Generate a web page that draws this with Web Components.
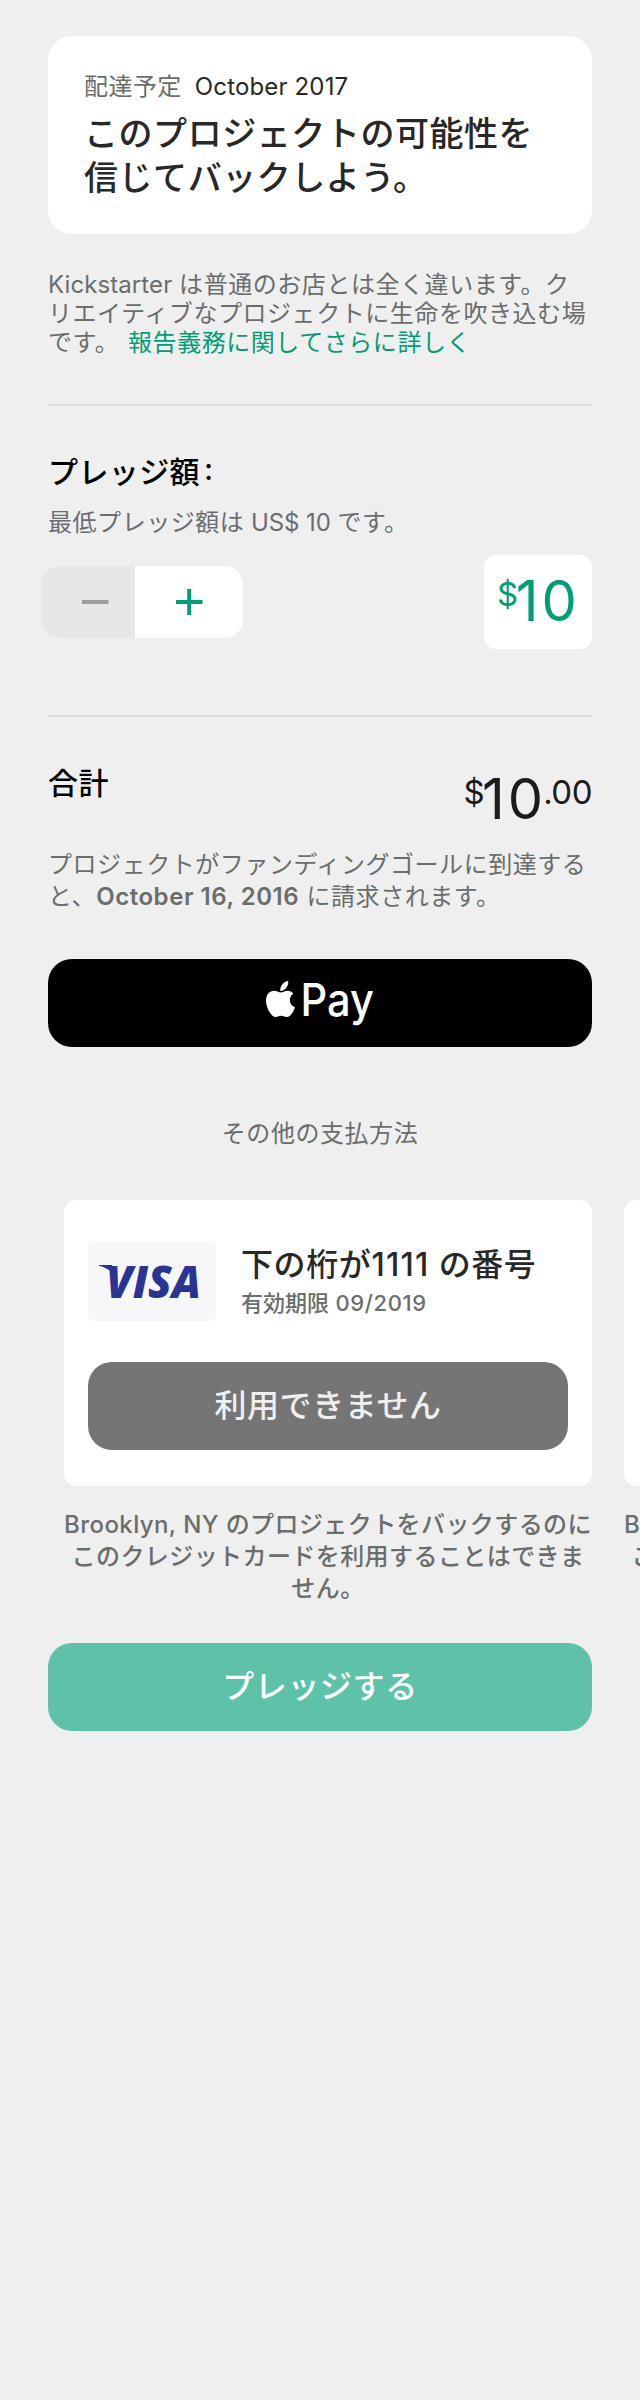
<!DOCTYPE html>
<html lang="ja">
<head>
<meta charset="utf-8">
<title>プレッジ</title>
<style>
  html, body { margin: 0; background: #efefef; }
  body { width: 640px; height: 2400px; overflow: hidden; font-family: Inter, "Noto Sans CJK JP", sans-serif; color: #6a6d6c; }
</style>
</head>
<body>
<pledge-page></pledge-page>
<script>
const define = (name, html) => {
  const tpl = document.createElement('template');
  tpl.innerHTML = html;
  customElements.define(name, class extends HTMLElement {
    constructor() {
      super();
      this.attachShadow({ mode: 'open' }).append(tpl.content.cloneNode(true));
    }
  });
};

define('reward-card', `
<style>
  :host { display: block; box-sizing: border-box; height: 198px; padding: 36px; background: #fff; border-radius: 24px; }
  .when { font-size: 24px; line-height: 29px; letter-spacing: .45px; white-space: nowrap; }
  .date { color: #282828; margin-left: 13px; letter-spacing: .15px; }
  .title { margin-top: 11px; font-size: 34px; line-height: 44px; font-weight: 500; letter-spacing: .55px; color: #282828; white-space: nowrap; }
</style>
<div class="when"><slot name="label"></slot><span class="date"><slot name="date"></slot></span></div>
<div class="title"><slot></slot></div>`);

define('rule-line', `<style>:host { display: block; height: 2px; background: #dcdcdc; }</style>`);

define('amount-stepper', `
<style>
  :host { display: flex; width: 202px; height: 72px; border-radius: 18px; overflow: hidden; background: #fff; }
  div { display: flex; align-items: center; }
  .minus { width: 53px; padding-left: 41px; background: #e7e7e7; }
  .plus { flex: 1; padding-left: 41px; }
  svg { display: block; }
</style>
<div class="minus"><svg width="27" height="26"><path d="M0 13H26.5" stroke="#9b9e9e" stroke-width="4"/></svg></div>
<div class="plus"><svg width="27" height="26"><path d="M0 13H26.5M13.2 0V26" stroke="#009e74" stroke-width="4"/></svg></div>`);

define('money-amount', `
<style>
  :host { display: flex; align-items: flex-start; line-height: 1; }
  .small { font-size: 33px; line-height: 34px; padding-top: 4px; letter-spacing: -.5px; }
  .big { font-size: 56px; line-height: 56px; margin: 0 -3px 0 -2px; letter-spacing: 3px; }
</style>
<span class="small"><slot name="sign"></slot></span><span class="big"><slot></slot></span><span class="small"><slot name="cents"></slot></span>`);

define('action-button', `
<style>
  :host { display: flex; align-items: center; justify-content: center; height: 88px; border-radius: 24px; font-size: 32px; line-height: 40px; letter-spacing: .6px; font-weight: 500; color: #fff; background: var(--fill, #5ec2a9); }
</style><slot></slot>`);

define('apple-pay-mark', `
<style>:host { display: block; } svg { display: block; }</style>
<svg width="110" height="56" viewBox="0 0 110 56">
  <g fill="#fff" transform="translate(1 5)">
    <path d="M22.2 5.2C22.6 8.2 21.4 10.700 19.900 12.400C18.400 14.200 16.300 15.300 14.300 15.100C14 12.400 15.100 9.800 16.600 8.100C18.200 6.300 20.300 5.300 22.200 5.200Z" transform="translate(0 -4.200)"/>
    <path d="M27.300 13.800C24.900 15.300 23.800 17.500 23.800 20C23.800 23.300 25.800 26 29 27.200C28.400 29.200 27.400 31.300 26.100 33.200C24.500 35.500 23 37 20.700 37C18.500 37 17.700 35.700 15.200 35.700C12.600 35.700 11.700 37 9.600 37C7.300 37 5.700 35.300 4.100 33C1.700 29.600 0 24.900 0 20.600C0 14.500 3.800 10.800 8 10.800C10.700 10.800 12.800 12.500 14.700 12.500C16.500 12.500 18.600 10.700 21.600 10.700C23.900 10.700 26 11.800 27.300 13.800Z"/>
    <text x="34.500" y="36" font-family="Inter" font-size="45.500" font-weight="500" letter-spacing="0" textLength="73.500" lengthAdjust="spacingAndGlyphs">Pay</text>
  </g>
</svg>`);

define('visa-logo', `
<style>
  :host { display: block; width: 128px; height: 80px; border-radius: 6px; background: #f7f7fa; overflow: hidden; }
  svg { display: block; }
</style>
<svg width="128" height="80" viewBox="0 0 128 80">
  <path d="M11 24H24L30 42Q25 28 11 24.800Z" fill="#283593"/>
  <text x="18" y="56.500" fill="#283593" font-family="Open Sans" font-weight="800" font-style="italic" font-size="45" textLength="95" lengthAdjust="spacingAndGlyphs">VISA</text>
</svg>`);

define('payment-card', `
<style>
  :host { display: block; flex: none; width: 528px; }
  .box { box-sizing: border-box; height: 286px; padding: 41px 24px 36px; background: #fff; border-radius: 12px; }
  .head { display: flex; gap: 25px; height: 80px; margin-bottom: 41px; }
  .name { margin-top: 4px; font-size: 32px; line-height: 40px; letter-spacing: .6px; font-weight: 500; color: #282828; white-space: nowrap; }
  .exp { margin-top: 4px; font-size: 22px; line-height: 29px; font-weight: 500; white-space: nowrap; }
  action-button { --fill: #757575; color: #efefef; }
  .note { margin-top: 23px; font-size: 24px; line-height: 32px; letter-spacing: .42px; font-weight: 500; text-align: center; white-space: nowrap; }
  :host([peek]) .head, :host([peek]) action-button { display: none; }
</style>
<div class="box">
  <div class="head"><visa-logo></visa-logo><div><div class="name"><slot name="name"></slot></div><div class="exp"><slot name="expiry"></slot></div></div></div>
  <action-button>利用できません</action-button>
</div>
<div class="note"><slot></slot></div>`);

define('pledge-page', `
<style>
  :host { display: block; padding: 36px 48px 0; }
  .text { font-size: 24px; line-height: 29px; letter-spacing: .55px; white-space: nowrap; }
  .head { font-size: 30px; line-height: 36px; letter-spacing: .4px; font-weight: 500; color: #000; }
  .colon { margin-left: 4px; line-height: 0; vertical-align: 3px; }
  a { color: #009e74; margin-left: 1.5px; }
  .intro { margin: 36px 0 47px; }
  .latin { letter-spacing: .08px; }
  .minimum { margin: 18px 0; color: #6b6c72; }
  .minimum .latin { letter-spacing: -.1px; }
  .row { display: flex; justify-content: space-between; align-items: center; }
  .amount { box-sizing: border-box; width: 108px; height: 94px; padding: 18px 0 0 13px; background: #fff; border-radius: 12px; color: #009e74; }
  .total { height: 84px; margin-top: 48px; align-items: flex-start; }
  .total money-amount { margin-top: 6px; color: #1b1b1b; }
  .billing { line-height: 32px; }
  .cards { display: flex; gap: 32px; margin: 52px -48px 38px 0; padding-left: 16px; overflow: hidden; }
  .digits { letter-spacing: 1.25px; }
  .year { letter-spacing: .6px; }
  .apple { --fill: #000; margin-top: 46px; }
  .other { margin-top: 72px; text-align: center; }
  b { font-weight: 600; }
</style>
<reward-card><span slot="label">配達予定</span><span slot="date">October 2017</span>このプロジェクトの可能性を<br>信じてバックしよう。</reward-card>
<div class="text intro"><span class="latin">Kickstarter </span>は普通のお店とは全く違います。ク<br>リエイティブなプロジェクトに生命を吹き込む場<br>です。<a> 報告義務に関してさらに詳しく</a></div>
<rule-line></rule-line>
<div class="head" style="margin-top:48px">プレッジ額<span class="colon">:</span></div>
<div class="text minimum">最低プレッジ額は<span class="latin"> US$ 10 </span>です。</div>
<div class="row"><amount-stepper style="margin-left:-7px"></amount-stepper><div class="amount"><money-amount><span slot="sign">$</span>10</money-amount></div></div>
<rule-line style="margin-top:66px"></rule-line>
<div class="row total"><div class="head">合計</div><money-amount><span slot="sign">$</span>10<span slot="cents">.00</span></money-amount></div>
<div class="text billing">プロジェクトがファンディングゴールに到達する<br>と、<b>October 16, 2016</b> に請求されます。</div>
<action-button class="apple"><apple-pay-mark></apple-pay-mark></action-button>
<div class="text other">その他の支払方法</div>
<div class="cards">
  <payment-card><span slot="name">下の桁が<span class="digits">1111</span> の番号</span><span slot="expiry">有効期限<span class="year"> 09/2019</span></span>Brooklyn, NY のプロジェクトをバックするのに<br>このクレジットカードを利用することはできま<br>せん。</payment-card>
  <payment-card peek>Brooklyn, NY のプロジェクトをバックするのに<br>このクレジットカードを利用することはできま<br>せん。</payment-card>
</div>
<action-button>プレッジする</action-button>`);
</script>
</body>
</html>
